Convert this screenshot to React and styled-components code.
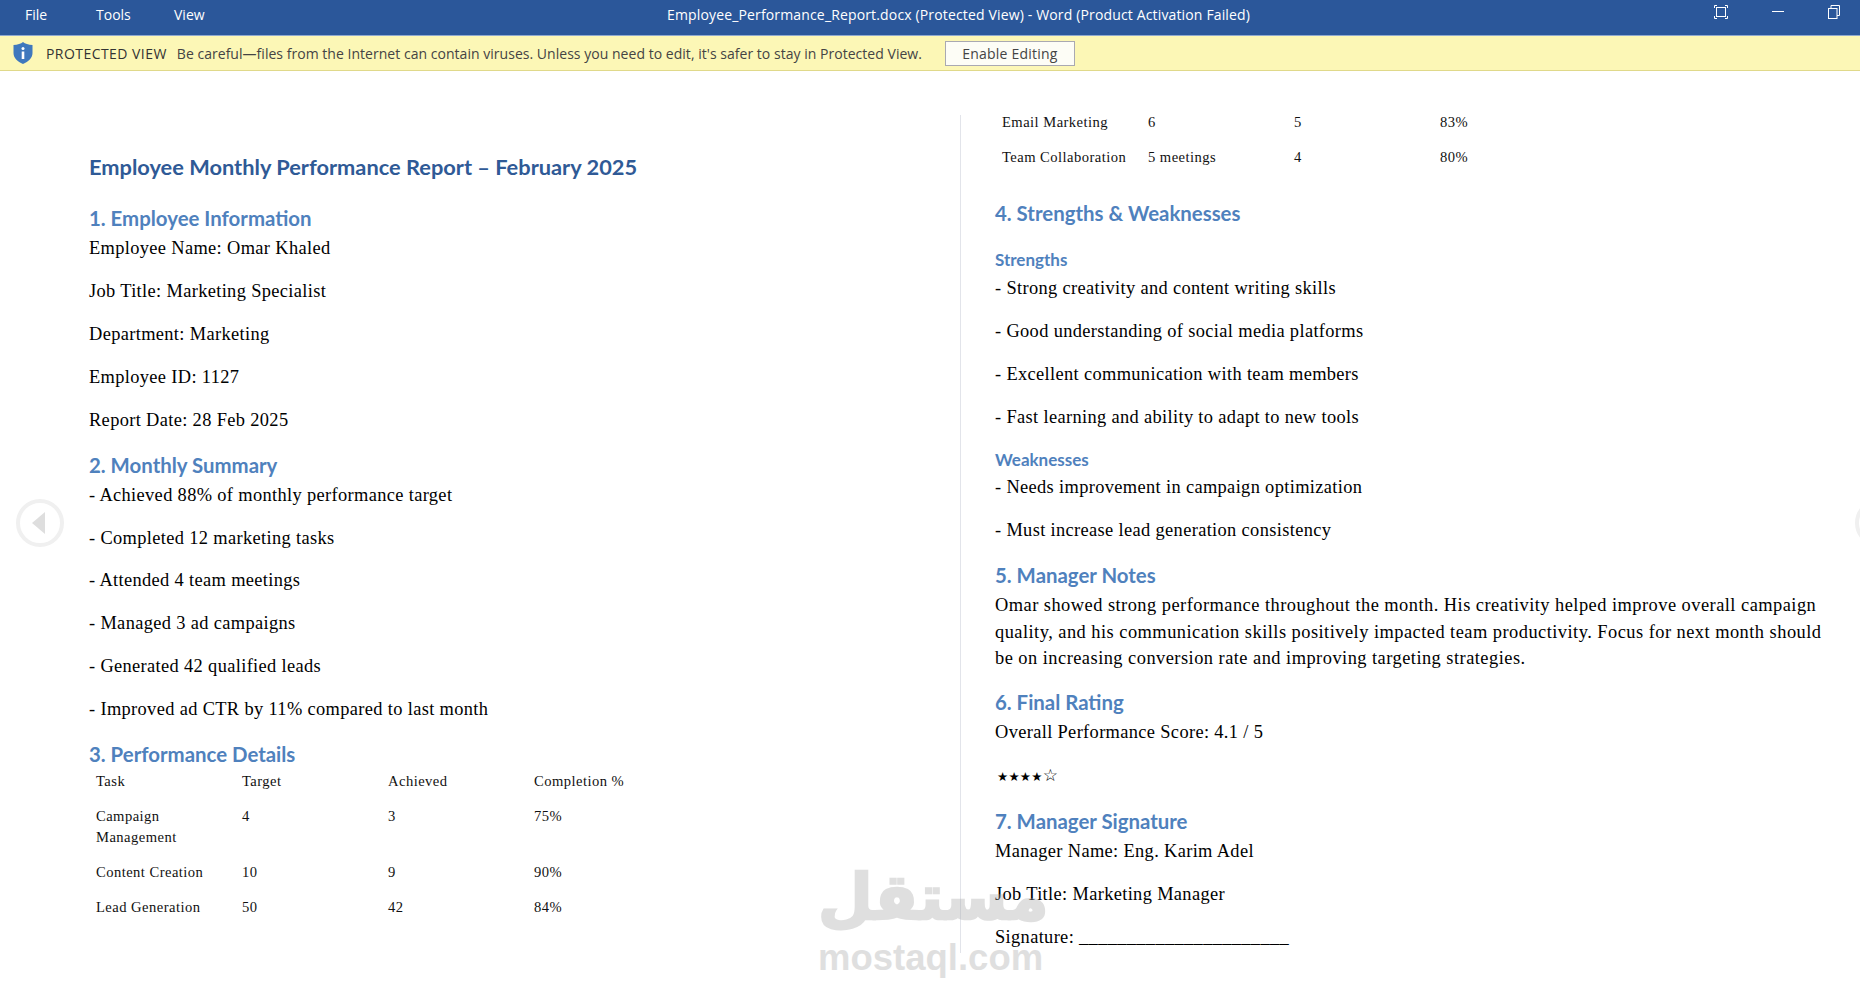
import React from 'react';
import styled, { createGlobalStyle } from 'styled-components';

const Global = createGlobalStyle`
html,body{margin:0;padding:0;background:#fff;}
`;

const Window = styled.div`
position:relative;
width:1860px;
height:992px;
overflow:hidden;
display:flex;
flex-direction:column;
background:#fff;
`;

const TitleBar = styled.div`
height:35px;
box-sizing:content-box;
flex:none;
background:#2b579a;
border-bottom:1px solid #8fa9cf;
display:flex;
align-items:flex-start;
padding-left:25px;
color:#fff;
font-family:"Open Sans",sans-serif;
font-size:14px;
line-height:29px;
`;

const Menu = styled.div`
width:642px;
display:flex;
`;

const MenuItem = styled.span`
width:${({w})=>w}px;
`;

const DocName = styled.div`
white-space:nowrap;
letter-spacing:.15px;
`;

const Controls = styled.div`
margin-left:auto;
padding-right:20px;
display:flex;
gap:44px;
padding-top:5px;
`;

const Banner = styled.div`
height:34px;
flex:none;
background:#fcf7b6;
border-bottom:1px solid #e0d98a;
display:flex;
align-items:center;
padding-left:13px;
color:#444;
font-family:"Open Sans",sans-serif;
font-size:14px;
white-space:nowrap;
`;

const BannerLabel = styled.strong`
font-weight:400;
margin-left:13px;
letter-spacing:.45px;
color:#333;
`;

const BannerText = styled.span`
margin-left:10px;
letter-spacing:.03px;
`;

const EnableBtn = styled.button`
margin-left:23px;
width:130px;
height:25px;
background:#fdfdf6;
border:1px solid #a9a9b2;
color:#444;
font:14px "Open Sans",sans-serif;
letter-spacing:.2px;
padding:0;
`;

const Doc = styled.div`
flex:1;
display:flex;
min-height:0;
`;

const Column = styled.div`
box-sizing:border-box;
display:flex;
flex-direction:column;
padding-left:${({left})=>left}px;
padding-top:${({top})=>top}px;
width:${({w})=>w}px;
flex:none;
`;

const Divider = styled.div`
width:1px;
flex:none;
background:#e2e4ea;
margin-top:44px;
height:838px;
`;

const Title = styled.h1`
margin:0 0 22px;
font:700 21.8px/30px Lato,sans-serif;
color:#2f5a96;
white-space:nowrap;
`;

const Heading = styled.h2`
margin:${({mt})=>mt ?? 1.2}px 0 3px;
font:700 20.4px/28px Lato,sans-serif;
color:#4f81bd;
white-space:nowrap;
`;

const SubHeading = styled.h3`
margin:${({mt})=>mt}px 0 ${({mb})=>mb}px;
font:700 17px/22px Lato,sans-serif;
color:#4f81bd;
`;

const Para = styled.p`
margin:0 0 16.3px;
font:18.4px/26.6px "Liberation Serif",serif;
color:#000;
white-space:nowrap;
letter-spacing:.35px;
`;

const Notes = styled(Para)`
letter-spacing:.47px;
`;

const Stars = styled(Para)`
font-family:"DejaVu Sans",sans-serif;
letter-spacing:.2px;
padding-left:2px;
`;

const Star = styled.span`
font-size:${({big})=>big?17:12.5}px;
`;

const Table = styled.div`
margin-left:${({ml})=>ml}px;
display:grid;
grid-template-columns:repeat(4,146px);
font:14.6px/21px "Liberation Serif",serif;
color:#111;
`;

const Cell = styled.div`
padding-bottom:14px;
letter-spacing:.45px;
`;

const NavCircle = styled.div`
position:absolute;
top:499px;
width:48px;
height:48px;
box-sizing:border-box;
border:4px solid #f0f0f0;
border-radius:50%;
display:flex;
align-items:center;
justify-content:center;
${({side})=>side==='left'?'left:16px;':'right:-43px;'}
`;

const NavArrow = styled.div`
width:0;
height:0;
border-top:11px solid transparent;
border-bottom:11px solid transparent;
border-right:13px solid #dedede;
margin-right:4px;
`;

const Watermark = styled.div`
position:absolute;
left:818px;
top:854px;
width:223px;
text-align:center;
color:#a8a8a8;
opacity:.36;
pointer-events:none;
`;

const WatermarkArabic = styled.div`
font:700 63px/88px "DejaVu Sans",sans-serif;
-webkit-text-stroke:2.5px #a8a8a8;
`;

const WatermarkLatin = styled.div`
font:700 36.5px/34px "Liberation Sans",sans-serif;
margin-top:-1px;
`;

const FullScreenIcon = () => (
  <svg width="14" height="14" viewBox="0 0 14 14" fill="none" stroke="#fff" strokeWidth="1">
    <rect x="2.5" y="2.5" width="9" height="9" />
    <path d="M.5 3V.5H3M11 .5h2.5V3M13.5 11v2.5H11M3 13.500H.5V11" />
  </svg>
);

const MinimizeIcon = () => (
  <svg width="12" height="14" viewBox="0 0 12 14" fill="none" stroke="#fff" strokeWidth="1">
    <path d="M0 6.5h12" />
  </svg>
);

const RestoreIcon = () => (
  <svg width="12" height="14" viewBox="0 0 12 14" fill="none" stroke="#fff" strokeWidth="1">
    <rect x=".5" y="3.500" width="8.500" height="10" />
    <path d="M3 3.500V.5h8.500v10H9" />
  </svg>
);

const ShieldIcon = () => (
  <svg width="20" height="22" viewBox="0 0 20 22">
    <path d="M10 0c2 1.800 5.500 2.800 9.500 3v8c0 5-4 8.700-9.500 11C4.500 19.700.5 16 .5 11V3C4.500 2.800 8 1.800 10 0z" fill="#3f78bd" />
    <circle cx="10" cy="6.500" r="1.500" fill="#fff" />
    <rect x="8.700" y="9.500" width="2.600" height="7.500" fill="#fff" />
  </svg>
);

const firstTable = [
  ['Task', 'Target', 'Achieved', 'Completion %'],
  [<>Campaign<br />Management</>, '4', '3', '75%'],
  ['Content Creation', '10', '9', '90%'],
  ['Lead Generation', '50', '42', '84%'],
];

const secondTable = [
  ['Email Marketing', '6', '5', '83%'],
  ['Team Collaboration', '5 meetings', '4', '80%'],
];

const employeeInfo = [
  'Employee Name: Omar Khaled',
  'Job Title: Marketing Specialist',
  'Department: Marketing',
  'Employee ID: 1127',
  'Report Date: 28 Feb 2025',
];

const summary = [
  '- Achieved 88% of monthly performance target',
  '- Completed 12 marketing tasks',
  '- Attended 4 team meetings',
  '- Managed 3 ad campaigns',
  '- Generated 42 qualified leads',
  '- Improved ad CTR by 11% compared to last month',
];

const strengths = [
  '- Strong creativity and content writing skills',
  '- Good understanding of social media platforms',
  '- Excellent communication with team members',
  '- Fast learning and ability to adapt to new tools',
];

const weaknesses = [
  '- Needs improvement in campaign optimization',
  '- Must increase lead generation consistency',
];

const Rows = ({ rows, ml }) => (
  <Table ml={ml}>
    {rows.flat().map((cell, i) => <Cell key={i}>{cell}</Cell>)}
  </Table>
);

const App = () => {
  return (
    <Window>
      <Global />
      <TitleBar>
        <Menu>
          <MenuItem w={71}>File</MenuItem>
          <MenuItem w={78}>Tools</MenuItem>
          <MenuItem w={60}>View</MenuItem>
        </Menu>
        <DocName>Employee_Performance_Report.docx (Protected View) - Word (Product Activation Failed)</DocName>
        <Controls>
          <FullScreenIcon />
          <MinimizeIcon />
          <RestoreIcon />
        </Controls>
      </TitleBar>
      <Banner>
        <ShieldIcon />
        <BannerLabel>PROTECTED VIEW</BannerLabel>
        <BannerText>Be careful—files from the Internet can contain viruses. Unless you need to edit, it's safer to stay in Protected View.</BannerText>
        <EnableBtn>Enable Editing</EnableBtn>
      </Banner>
      <Doc>
        <Column left={89} top={81} w={960}>
          <Title>Employee Monthly Performance Report – February 2025</Title>
          <Heading mt={0}>1. Employee Information</Heading>
          {employeeInfo.map(t => <Para key={t}>{t}</Para>)}
          <Heading>2. Monthly Summary</Heading>
          {summary.map(t => <Para key={t}>{t}</Para>)}
          <Heading>3. Performance Details</Heading>
          <Rows rows={firstTable} ml={7} />
        </Column>
        <Divider />
        <Column left={34} top={41} w={899}>
          <Rows rows={secondTable} ml={7} />
          <Heading mt={17}>4. Strengths &amp; Weaknesses</Heading>
          <SubHeading mt={19} mb={4}>Strengths</SubHeading>
          {strengths.map(t => <Para key={t}>{t}</Para>)}
          <SubHeading mt={2} mb={3.5}>Weaknesses</SubHeading>
          {weaknesses.map(t => <Para key={t}>{t}</Para>)}
          <Heading>5. Manager Notes</Heading>
          <Notes>
            Omar showed strong performance throughout the month. His creativity helped improve overall campaign<br />
            quality, and his communication skills positively impacted team productivity. Focus for next month should<br />
            be on increasing conversion rate and improving targeting strategies.
          </Notes>
          <Heading mt={0}>6. Final Rating</Heading>
          <Para>Overall Performance Score: 4.1 / 5</Para>
          <Stars><Star>★★★★</Star><Star big>☆</Star></Stars>
          <Heading mt={0}>7. Manager Signature</Heading>
          <Para>Manager Name: Eng. Karim Adel</Para>
          <Para>Job Title: Marketing Manager</Para>
          <Para>Signature: ______________________</Para>
        </Column>
      </Doc>
      <NavCircle side="left"><NavArrow /></NavCircle>
      <NavCircle side="right" />
      <Watermark>
        <WatermarkArabic>مستقل</WatermarkArabic>
        <WatermarkLatin>mostaql.com</WatermarkLatin>
      </Watermark>
    </Window>
  );
};

export default App;
